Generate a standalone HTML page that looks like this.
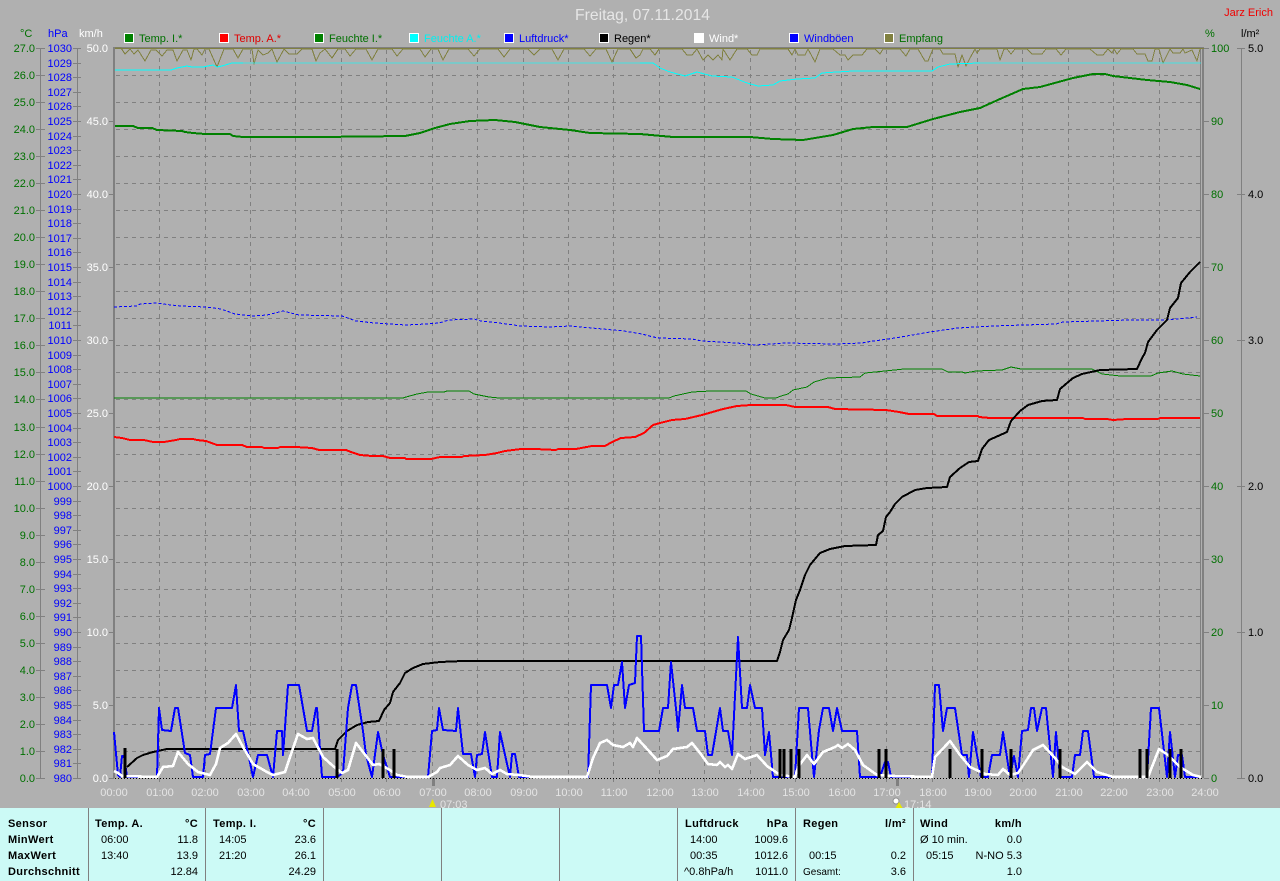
<!DOCTYPE html>
<html lang="de"><head><meta charset="utf-8"><title>Freitag, 07.11.2014</title>
<style>
html,body{margin:0;padding:0;background:#b0b0b0;width:1280px;height:881px;overflow:hidden}
svg{display:block}
text{font-family:"Liberation Sans",sans-serif;font-size:11px}
.g{fill:#007000}.b{fill:#0000ff}.w{fill:#fff}.k{fill:#000}.t{fill:#e4e4e4}
.e{text-anchor:end}
.h{font-weight:bold;letter-spacing:.35px}
polyline{fill:none;stroke-linejoin:round;shape-rendering:crispEdges}
</style></head><body>
<svg xmlns="http://www.w3.org/2000/svg" width="1280" height="881" viewBox="0 0 1280 881">
<rect width="1280" height="881" fill="#b0b0b0"/>
<text x="642.5" y="20" text-anchor="middle" style="font-size:15.7px" fill="#e6e6e6">Freitag, 07.11.2014</text>
<text x="1273" y="16" class="e" fill="#f00000">Jarz Erich</text>

<!-- headers -->
<text x="20" y="37" class="g">°C</text><text x="48" y="37" class="b">hPa</text><text x="79" y="37" class="w">km/h</text>
<text x="1205" y="37" class="g">%</text><text x="1241" y="37" class="k">l/m²</text>

<!-- legend -->
<g stroke="#fff" stroke-width="1" shape-rendering="crispEdges">
<rect x="124.5" y="33.5" width="9" height="9" fill="#008000"/>
<rect x="219.5" y="33.5" width="9" height="9" fill="#ff0000"/>
<rect x="314.5" y="33.5" width="9" height="9" fill="#008000"/>
<rect x="409.5" y="33.5" width="9" height="9" fill="#00ffff"/>
<rect x="504.5" y="33.5" width="9" height="9" fill="#0000ff"/>
<rect x="599.5" y="33.5" width="9" height="9" fill="#000"/>
<rect x="694.5" y="33.5" width="9" height="9" fill="#fff"/>
<rect x="789.5" y="33.5" width="9" height="9" fill="#0000ff"/>
<rect x="884.5" y="33.5" width="9" height="9" fill="#808040"/>
</g>
<text x="139" y="42" class="g">Temp. I.*</text>
<text x="234" y="42" fill="#e00000">Temp. A.*</text>
<text x="329" y="42" class="g">Feuchte I.*</text>
<text x="424" y="42" fill="#00f0f0">Feuchte A.*</text>
<text x="519" y="42" class="b">Luftdruck*</text>
<text x="614" y="42" class="k">Regen*</text>
<text x="709" y="42" class="w">Wind*</text>
<text x="804" y="42" class="b">Windböen</text>
<text x="899" y="42" class="g">Empfang</text>

<!-- grid -->
<path shape-rendering="crispEdges" stroke="#808080" stroke-width="1" stroke-dasharray="4 4" fill="none" d="M116 75.5H1200M116 102.5H1200M116 129.5H1200M116 156.5H1200M116 183.5H1200M116 210.5H1200M116 237.5H1200M116 264.5H1200M116 291.5H1200M116 318.5H1200M116 345.5H1200M116 372.5H1200M116 399.5H1200M116 427.5H1200M116 454.5H1200M116 481.5H1200M116 508.5H1200M116 535.5H1200M116 562.5H1200M116 589.5H1200M116 616.5H1200M116 643.5H1200M116 670.5H1200M116 697.5H1200M116 724.5H1200M116 751.5H1200
M159.5 50V784M205.5 50V784M250.5 50V784M295.5 50V784M341.5 50V784M386.5 50V784M432.5 50V784M477.5 50V784M523.5 50V784M568.5 50V784M613.5 50V784M659.5 50V784M704.5 50V784M750.5 50V784M795.5 50V784M841.5 50V784M886.5 50V784M932.5 50V784M977.5 50V784M1022.5 50V784M1068.5 50V784M1113.5 50V784M1159.5 50V784"/>

<!-- axes -->
<path shape-rendering="crispEdges" stroke="#808080" stroke-width="1" fill="none" d="M40.5 48V778M77.5 48V778M1241.5 48V778M1200.5 48V778
M36 48.5H45M36 75.5H45M36 102.5H45M36 129.5H45M36 156.5H45M36 183.5H45M36 210.5H45M36 237.5H45M36 264.5H45M36 291.5H45M36 318.5H45M36 345.5H45M36 372.5H45M36 399.5H45M36 427.5H45M36 454.5H45M36 481.5H45M36 508.5H45M36 535.5H45M36 562.5H45M36 589.5H45M36 616.5H45M36 643.5H45M36 670.5H45M36 697.5H45M36 724.5H45M36 751.5H45M36 778.5H45
M73 48.5H81M73 63.5H81M73 77.5H81M73 92.5H81M73 106.5H81M73 121.5H81M73 136.5H81M73 150.5H81M73 165.5H81M73 179.5H81M73 194.5H81M73 209.5H81M73 223.5H81M73 238.5H81M73 252.5H81M73 267.5H81M73 282.5H81M73 296.5H81M73 311.5H81M73 325.5H81M73 340.5H81M73 355.5H81M73 369.5H81M73 384.5H81M73 398.5H81M73 413.5H81M73 428.5H81M73 442.5H81M73 457.5H81M73 471.5H81M73 486.5H81M73 501.5H81M73 515.5H81M73 530.5H81M73 544.5H81M73 559.5H81M73 574.5H81M73 588.5H81M73 603.5H81M73 617.5H81M73 632.5H81M73 647.5H81M73 661.5H81M73 676.5H81M73 690.5H81M73 705.5H81M73 720.5H81M73 734.5H81M73 749.5H81M73 763.5H81M73 778.5H81
M109 121.5H114M109 194.5H114M109 267.5H114M109 340.5H114M109 413.5H114M109 486.5H114M109 559.5H114M109 632.5H114M109 705.5H114M109 778.5H114
M1204 48.5H1209M1204 121.5H1209M1204 194.5H1209M1204 267.5H1209M1204 340.5H1209M1204 413.5H1209M1204 486.5H1209M1204 559.5H1209M1204 632.5H1209M1204 705.5H1209M1204 778.5H1209
M1237 48.5H1245M1237 194.5H1245M1237 340.5H1245M1237 486.5H1245M1237 632.5H1245M1237 778.5H1245"/>
<rect x="113" y="47" width="2" height="731" fill="#808080"/>
<rect x="1202" y="47" width="2" height="731" fill="#808080"/>
<rect x="113" y="47" width="1091" height="2" fill="#808080"/>

<!-- celsius labels -->
<g class="g e">
<text x="35" y="52" class="g e">27.0</text><text x="35" y="79" class="g e">26.0</text><text x="35" y="106" class="g e">25.0</text><text x="35" y="133" class="g e">24.0</text><text x="35" y="160" class="g e">23.0</text><text x="35" y="187" class="g e">22.0</text><text x="35" y="214" class="g e">21.0</text><text x="35" y="241" class="g e">20.0</text><text x="35" y="268" class="g e">19.0</text><text x="35" y="295" class="g e">18.0</text><text x="35" y="322" class="g e">17.0</text><text x="35" y="349" class="g e">16.0</text><text x="35" y="376" class="g e">15.0</text><text x="35" y="403" class="g e">14.0</text><text x="35" y="431" class="g e">13.0</text><text x="35" y="458" class="g e">12.0</text><text x="35" y="485" class="g e">11.0</text><text x="35" y="512" class="g e">10.0</text><text x="35" y="539" class="g e">9.0</text><text x="35" y="566" class="g e">8.0</text><text x="35" y="593" class="g e">7.0</text><text x="35" y="620" class="g e">6.0</text><text x="35" y="647" class="g e">5.0</text><text x="35" y="674" class="g e">4.0</text><text x="35" y="701" class="g e">3.0</text><text x="35" y="728" class="g e">2.0</text><text x="35" y="755" class="g e">1.0</text><text x="35" y="782" class="g e">0.0</text>
</g>
<!-- hPa labels -->
<g>
<text x="72" y="52" class="b e">1030</text><text x="72" y="67" class="b e">1029</text><text x="72" y="81" class="b e">1028</text><text x="72" y="96" class="b e">1027</text><text x="72" y="110" class="b e">1026</text><text x="72" y="125" class="b e">1025</text><text x="72" y="140" class="b e">1024</text><text x="72" y="154" class="b e">1023</text><text x="72" y="169" class="b e">1022</text><text x="72" y="183" class="b e">1021</text><text x="72" y="198" class="b e">1020</text><text x="72" y="213" class="b e">1019</text><text x="72" y="227" class="b e">1018</text><text x="72" y="242" class="b e">1017</text><text x="72" y="256" class="b e">1016</text><text x="72" y="271" class="b e">1015</text><text x="72" y="286" class="b e">1014</text><text x="72" y="300" class="b e">1013</text><text x="72" y="315" class="b e">1012</text><text x="72" y="329" class="b e">1011</text><text x="72" y="344" class="b e">1010</text><text x="72" y="359" class="b e">1009</text><text x="72" y="373" class="b e">1008</text><text x="72" y="388" class="b e">1007</text><text x="72" y="402" class="b e">1006</text><text x="72" y="417" class="b e">1005</text><text x="72" y="432" class="b e">1004</text><text x="72" y="446" class="b e">1003</text><text x="72" y="461" class="b e">1002</text><text x="72" y="475" class="b e">1001</text><text x="72" y="490" class="b e">1000</text><text x="72" y="505" class="b e">999</text><text x="72" y="519" class="b e">998</text><text x="72" y="534" class="b e">997</text><text x="72" y="548" class="b e">996</text><text x="72" y="563" class="b e">995</text><text x="72" y="578" class="b e">994</text><text x="72" y="592" class="b e">993</text><text x="72" y="607" class="b e">992</text><text x="72" y="621" class="b e">991</text><text x="72" y="636" class="b e">990</text><text x="72" y="651" class="b e">989</text><text x="72" y="665" class="b e">988</text><text x="72" y="680" class="b e">987</text><text x="72" y="694" class="b e">986</text><text x="72" y="709" class="b e">985</text><text x="72" y="724" class="b e">984</text><text x="72" y="738" class="b e">983</text><text x="72" y="753" class="b e">982</text><text x="72" y="767" class="b e">981</text><text x="72" y="782" class="b e">980</text>
</g>
<!-- km/h labels -->
<text x="108" y="52" class="w e">50.0</text><text x="108" y="125" class="w e">45.0</text><text x="108" y="198" class="w e">40.0</text><text x="108" y="271" class="w e">35.0</text><text x="108" y="344" class="w e">30.0</text><text x="108" y="417" class="w e">25.0</text><text x="108" y="490" class="w e">20.0</text><text x="108" y="563" class="w e">15.0</text><text x="108" y="636" class="w e">10.0</text><text x="108" y="709" class="w e">5.0</text><text x="108" y="782" class="w e">0.0</text>
<!-- % labels -->
<text x="1211" y="52" class="g">100</text><text x="1211" y="125" class="g">90</text><text x="1211" y="198" class="g">80</text><text x="1211" y="271" class="g">70</text><text x="1211" y="344" class="g">60</text><text x="1211" y="417" class="g">50</text><text x="1211" y="490" class="g">40</text><text x="1211" y="563" class="g">30</text><text x="1211" y="636" class="g">20</text><text x="1211" y="709" class="g">10</text><text x="1211" y="782" class="g">0</text>
<!-- l/m2 labels -->
<text x="1248" y="52" class="k">5.0</text><text x="1248" y="198" class="k">4.0</text><text x="1248" y="344" class="k">3.0</text><text x="1248" y="490" class="k">2.0</text><text x="1248" y="636" class="k">1.0</text><text x="1248" y="782" class="k">0.0</text>
<!-- time labels -->
<g text-anchor="middle">
<text x="114" y="796" class="t">00:00</text><text x="160" y="796" class="t">01:00</text><text x="205" y="796" class="t">02:00</text><text x="251" y="796" class="t">03:00</text><text x="296" y="796" class="t">04:00</text><text x="342" y="796" class="t">05:00</text><text x="387" y="796" class="t">06:00</text><text x="433" y="796" class="t">07:00</text><text x="478" y="796" class="t">08:00</text><text x="524" y="796" class="t">09:00</text><text x="569" y="796" class="t">10:00</text><text x="614" y="796" class="t">11:00</text><text x="660" y="796" class="t">12:00</text><text x="705" y="796" class="t">13:00</text><text x="751" y="796" class="t">14:00</text><text x="796" y="796" class="t">15:00</text><text x="842" y="796" class="t">16:00</text><text x="887" y="796" class="t">17:00</text><text x="933" y="796" class="t">18:00</text><text x="978" y="796" class="t">19:00</text><text x="1023" y="796" class="t">20:00</text><text x="1069" y="796" class="t">21:00</text><text x="1114" y="796" class="t">22:00</text><text x="1160" y="796" class="t">23:00</text><text x="1205" y="796" class="t">24:00</text>
</g>

<!-- sun marks -->
<rect x="432" y="778" width="3" height="8" fill="#808080"/>
<rect x="896" y="778" width="3" height="8" fill="#808080"/>
<text x="440" y="808" class="t">07:03</text>
<text x="904" y="808" class="t">17:14</text>
<path d="M432.5 799L436 807H429Z" fill="#e8e800"/>
<circle cx="896" cy="801" r="3" fill="#fff" stroke="#909090" stroke-width="1"/>
<path d="M899 802L902.5 808H895.5Z" fill="#e8e800"/>

<!-- series -->
<polyline stroke="#808040" stroke-width="1" points="115,48 121,48 125,54 130,49 134,54 138,50 145,61 151,50 156,50 162,56 167,50 173,50 177,61 183,50 187,50 191,60 194,49 197,49 202,55 205,49 209,49 217,67 224,49 233,49 238,58 243,49 252,49 254,64 258,50 263,55 268,53 272,49 277,62 284,49 289,54 297,54 302,49 312,49 316,61 320,53 325,49 332,58 338,49 345,49 350,56 356,49 366,49 372,60 378,49 392,49 397,56 403,49 420,49 425,57 431,49 438,49 443,60 449,49 468,49 474,56 480,49 498,49 504,57 510,49 528,49 534,55 540,49 552,49 558,60 564,49 584,49 590,56 596,49 606,49 612,62 618,49 630,49 636,58 640,55 643,49 650,49 655,55 659,49 682,49 687,55 692,55 697,49 703,60 708,55 713,60 718,55 722,60 723,49 730,60 737,49 747,49 752,55 757,55 760,49 788,49 792,55 795,49 798,55 805,55 808,49 815,62 820,49 833,49 840,55 845,55 848,60 853,55 862,55 867,49 875,49 880,54 883,49 900,49 906,56 910,49 918,49 925,61 928,61 933,49 940,49 943,54 955,54 958,67 962,55 966,66 970,58 975,49 977,53 980,49 983,49 997,49 1000,60 1004,49 1007,49 1011,54 1015,49 1027,49 1032,54 1042,54 1046,49 1056,49 1061,55 1066,49 1090,49 1097,55 1103,55 1108,49 1112,53 1114,49 1117,54 1121,49 1133,49 1137,54 1145,54 1148,61 1152,61 1155,49 1159,49 1163,63 1170,49 1173,53 1180,53 1183,49 1185,53 1192,50 1197,61 1200,49"/>
<path shape-rendering="crispEdges" d="M115 48.5H1204" stroke="#808040" stroke-width="1"/>

<!-- Feuchte A -->
<polyline stroke="#00ffff" stroke-width="1" stroke-opacity=".6" points="243,63 650,63"/>
<polyline stroke="#00ffff" stroke-width="1" stroke-opacity=".6" points="980,63 1201,63"/>
<polyline stroke="#00ffff" stroke-width="1" points="115,70 171,70 177,68 187,66 192,67 203,67 213,65 217,67 222,66 232,63 243,63"/>
<polyline stroke="#00ffff" stroke-width="1" points="640,63 653,63 660,68 670,72 685,76 697,72 712,76 732,77 747,83 758,86 773,85 780,81 797,79 815,78 822,73 837,72 853,71 932,71 938,67 950,64 980,63"/>

<!-- Temp I -->
<polyline stroke="#008000" stroke-width="2" points="115,126 133,126 138,128 152,128 157,130 182,131 185,132 193,133 205,134 230,134 233,136 243,137 320,137 405,136 420,133 435,128 450,124 470,121 495,120 515,122 540,127 570,130 590,133 640,134 673,137 750,137 773,139 803,140 833,135 853,129 873,127 907,127 933,119 960,112 980,108 1000,99 1023,89 1040,87 1073,78 1093,74 1105,74 1113,76 1147,80 1170,82 1187,85 1200,89"/>

<!-- Luftdruck -->
<polyline stroke="#0000ff" stroke-width="1" stroke-dasharray="3 2" points="114,307 137,306 140,304 156,303 171,305 181,306 206,307 221,309 235,314 253,316 267,315 283,311 299,315 342,316 356,321 374,323 406,325 426,324 439,323 449,320 474,319 481,321 499,323 521,326 549,327 571,326 592,328 624,331 642,334 653,337 660,338 692,339 702,341 737,343 755,345 786,343 835,344 862,343 867,342 895,338 930,332 958,328 993,326 1056,324 1063,322 1130,320 1165,320 1197,317"/>

<!-- Feuchte I -->
<polyline stroke="#008000" stroke-width="1" points="114,398 403,398 406,397 417,394 428,392 444,392 447,391 469,391 474,394 489,397 499,398 669,398 674,396 692,392 711,391 746,391 751,394 765,398 776,398 781,396 788,394 793,390 807,387 814,382 828,378 860,377 865,373 885,371 904,369 942,369 948,372 962,372 965,373 976,371 1002,370 1011,367 1021,369 1092,369 1102,374 1120,376 1151,376 1158,373 1172,371 1183,374 1200,376"/>

<!-- Temp A -->
<polyline stroke="#ff0000" stroke-width="2" points="114,437 122,438 130,440 144,440 153,442 164,442 176,440 180,439 193,439 197,440 206,441 217,445 242,445 247,447 262,447 264,448 278,448 280,447 296,447 312,448 319,450 346,450 351,452 360,455 372,456 383,456 390,458 405,458 406,459 431,459 440,457 462,457 464,456 485,455 497,453 505,451 521,449 535,449 556,450 558,449 576,449 592,446 605,446 612,442 621,438 635,437 644,433 653,425 660,423 672,420 685,419 702,415 723,409 737,406 751,405 786,405 795,407 828,407 835,409 886,410 899,412 909,414 934,414 937,416 978,416 979,417 990,418 1083,418 1085,419 1107,419 1113,420 1127,419 1158,419 1160,418 1200,418"/>

<!-- Regen cumulative -->
<polyline stroke="#000" stroke-width="2" points="127,767 137,758 143,755 153,752 167,749 177,749 335,749 338,740 347,731 357,725 368,722 379,721 384,710 390,703 393,692 400,683 405,673 413,668 423,664 440,662 463,661 777,661 780,652 783,640 789,630 792,618 796,600 800,590 805,575 810,565 820,553 830,549 845,546 876,545 878,535 883,531 886,517 890,512 895,504 902,497 915,490 927,488 947,487 950,477 960,468 969,462 978,461 982,449 989,440 1007,432 1011,421 1020,411 1028,405 1042,401 1057,400 1060,389 1073,378 1082,374 1100,370 1137,369 1142,358 1145,353 1148,342 1157,330 1167,320 1170,308 1178,298 1181,283 1190,272 1200,262"/>

<!-- Windböen -->
<polyline stroke="#0000ff" stroke-width="2" points="114,732 118,775 120,777 122,756 124,756 127,777 157,777 159,708 162,730 171,731 175,708 178,708 185,753 190,755 193,777 203,777 205,755 210,754 216,708 232,708 236,685 239,731 243,731 248,753 253,777 258,755 267,755 273,777 277,731 282,731 283,755 288,685 299,685 307,731 312,731 316,708 317,708 322,777 337,777 343,773 348,708 352,685 356,685 363,731 366,755 372,777 378,732 383,755 390,777 428,777 432,731 437,730 439,708 443,730 456,731 458,708 463,754 471,754 475,777 477,755 482,754 485,732 492,777 497,777 500,732 505,755 510,777 512,754 515,754 519,777 588,777 591,685 607,685 611,708 614,685 618,685 622,662 625,708 629,685 635,683 637,636 641,636 644,731 659,731 663,708 668,708 671,662 677,718 678,731 682,685 685,708 693,708 697,731 705,731 708,755 712,755 720,708 723,731 728,731 732,755 738,637 742,708 747,708 750,685 755,708 762,708 765,755 769,732 773,777 795,777 799,708 808,708 812,755 814,777 819,730 823,708 829,708 833,731 837,708 842,731 857,731 860,777 880,777 885,762 888,762 891,777 932,777 935,685 939,685 943,731 947,708 955,708 962,755 967,755 969,777 973,732 977,755 981,777 988,777 992,755 1000,755 1003,732 1010,777 1014,756 1018,777 1022,731 1028,730 1031,708 1034,708 1037,731 1042,708 1046,708 1053,777 1056,732 1060,777 1072,777 1075,755 1080,755 1083,731 1088,731 1094,777 1147,777 1151,708 1159,708 1167,777 1170,732 1175,777 1178,755 1182,755 1185,777 1200,777"/>

<!-- dotted baseline -->
<path shape-rendering="crispEdges" d="M115 778.5H1204" stroke="#000" stroke-width="1" stroke-dasharray="1 2"/>

<!-- Wind -->
<polyline stroke="#fff" stroke-width="2.6" points="114,771 118,773 122,776 157,777 163,767 173,766 178,752 188,764 198,772 210,775 216,764 220,748 228,743 236,734 243,747 253,764 267,772 273,775 285,772 290,757 298,734 307,739 313,738 323,757 333,766 342,773 348,770 356,743 363,752 373,765 379,764 390,770 397,775 408,777 428,777 437,772 440,768 450,765 458,756 468,765 477,770 485,768 492,774 500,770 507,774 519,775 533,777 587,777 593,758 600,743 607,740 613,745 623,747 630,743 633,747 637,738 648,750 657,760 667,756 673,749 687,747 692,743 700,753 708,764 717,765 720,762 725,767 728,765 732,769 738,754 745,759 757,755 767,766 780,775 795,777 798,767 807,755 814,764 823,752 835,747 838,745 842,748 848,744 855,750 863,765 877,775 893,776 932,777 935,757 950,741 960,755 970,767 985,774 998,775 1003,769 1010,775 1018,773 1028,758 1033,750 1043,745 1055,758 1062,767 1075,774 1087,762 1097,772 1113,777 1135,777 1148,777 1159,749 1168,755 1180,767 1193,775 1201,777"/>

<!-- Rain bars -->
<path shape-rendering="crispEdges" stroke="#000" stroke-width="3" d="M125 748V778M337 749V778M383 749V778M394 749V778M780 749V778M784 749V778M791 749V778M799 749V778M879 749V778M886 749V778M950 749V778M982 749V778M1011 749V778M1060 749V778M1140 749V778M1147 749V778M1170 749V778M1181 749V778"/>

<!-- Panel -->
<rect x="0" y="808" width="1280" height="73" fill="#ccfaf6"/>
<path shape-rendering="crispEdges" stroke="#808080" stroke-width="1" d="M88.5 808V881M205.5 808V881M323.5 808V881M441.5 808V881M559.5 808V881M677.5 808V881M795.5 808V881M913.5 808V881"/>

<g class="k">
<text x="8" y="827" class="h">Sensor</text>
<text x="8" y="843" class="h">MinWert</text>
<text x="8" y="859" class="h">MaxWert</text>
<text x="8" y="875" class="h">Durchschnitt</text>

<text x="95" y="827" class="h">Temp. A.</text><text x="198" y="827" class="h e">°C</text>
<text x="101" y="843">06:00</text><text x="198" y="843" class="e">11.8</text>
<text x="101" y="859">13:40</text><text x="198" y="859" class="e">13.9</text>
<text x="198" y="875" class="e">12.84</text>

<text x="213" y="827" class="h">Temp. I.</text><text x="316" y="827" class="h e">°C</text>
<text x="219" y="843">14:05</text><text x="316" y="843" class="e">23.6</text>
<text x="219" y="859">21:20</text><text x="316" y="859" class="e">26.1</text>
<text x="316" y="875" class="e">24.29</text>

<text x="685" y="827" class="h">Luftdruck</text><text x="788" y="827" class="h e">hPa</text>
<text x="690" y="843">14:00</text><text x="788" y="843" class="e">1009.6</text>
<text x="690" y="859">00:35</text><text x="788" y="859" class="e">1012.6</text>
<text x="684" y="875">^0.8hPa/h</text><text x="788" y="875" class="e">1011.0</text>

<text x="803" y="827" class="h">Regen</text><text x="906" y="827" class="h e">l/m²</text>
<text x="809" y="859">00:15</text><text x="906" y="859" class="e">0.2</text>
<text x="803" y="875" style="font-size:10px">Gesamt:</text><text x="906" y="875" class="e">3.6</text>

<text x="920" y="827" class="h">Wind</text><text x="1022" y="827" class="h e">km/h</text>
<text x="920" y="843">Ø 10 min.</text><text x="1022" y="843" class="e">0.0</text>
<text x="926" y="859">05:15</text><text x="1022" y="859" class="e">N-NO 5.3</text>
<text x="1022" y="875" class="e">1.0</text>
</g>
</svg>
</body></html>
